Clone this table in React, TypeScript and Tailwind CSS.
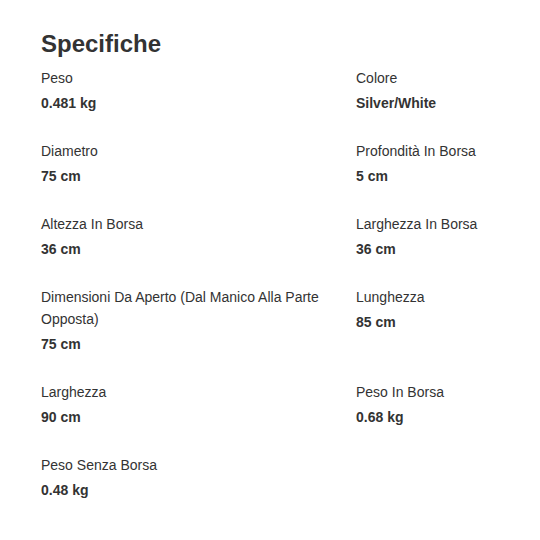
import React from 'react';

const specs: [string, string][] = [
  ['Peso', '0.481 kg'],
  ['Colore', 'Silver/White'],
  ['Diametro', '75 cm'],
  ['Profondità In Borsa', '5 cm'],
  ['Altezza In Borsa', '36 cm'],
  ['Larghezza In Borsa', '36 cm'],
  ['Dimensioni Da Aperto (Dal Manico Alla Parte Opposta)', '75 cm'],
  ['Lunghezza', '85 cm'],
  ['Larghezza', '90 cm'],
  ['Peso In Borsa', '0.68 kg'],
  ['Peso Senza Borsa', '0.48 kg'],
];

const App: React.FC = () => {
  return (
    <div
      className="w-[540px] h-[540px] bg-white px-[41px] pt-[28px] text-[#333]"
      style={{ fontFamily: "'Liberation Sans', Arial, sans-serif" }}
    >
      <h2 className="text-[24px] leading-[32px] font-bold mb-[7px]">Specifiche</h2>

      <div className="grid grid-cols-[290px_1fr] gap-x-[25px] gap-y-[26px]">
        {specs.map(([label, value]) => (
          <div key={label}>
            <div className="text-[14px] leading-[22px]">{label}</div>
            <div className="text-[14px] leading-[22px] font-bold mt-[3px]">{value}</div>
          </div>
        ))}
      </div>
    </div>
  );
};

export default App;
